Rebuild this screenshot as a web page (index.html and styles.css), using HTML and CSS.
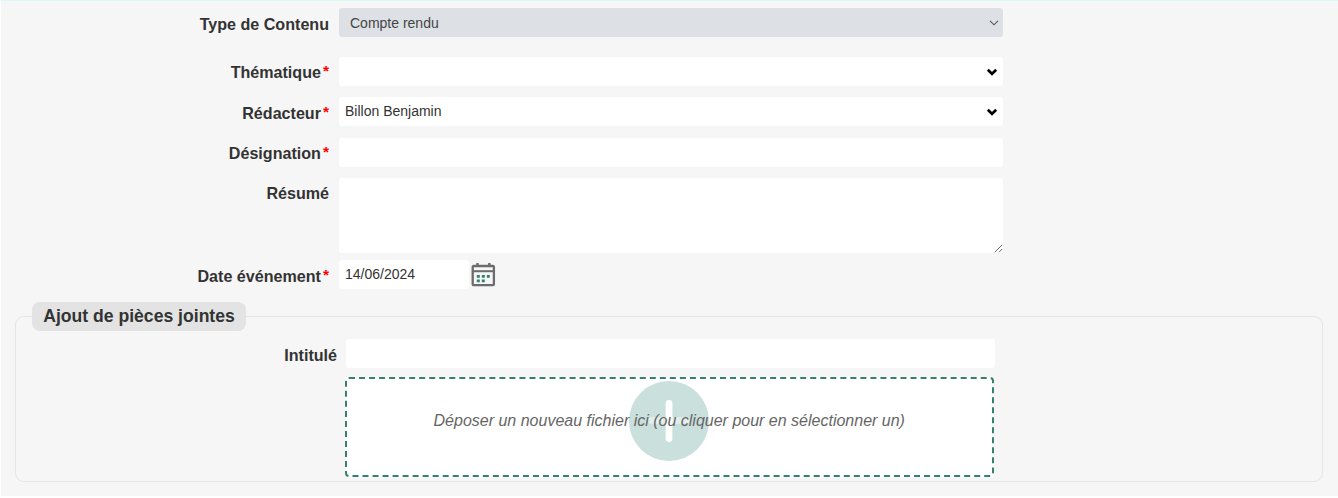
FILE: index.html
```html
<!DOCTYPE html>
<html lang="fr">
<head>
<meta charset="utf-8">
<title>Compte rendu</title>
<link rel="stylesheet" href="styles.css">
</head>
<body>
<form class="panel">
  <div class="row row-type">
    <div class="label">Type de Contenu</div>
    <div class="field disabled"><span>Compte rendu</span>
      <svg class="chev-thin" width="10" height="6" viewBox="0 0 10 6"><path d="M1 .8 5 4.8 9 .8" fill="none" stroke="#555" stroke-width="1.1"/></svg>
    </div>
  </div>
  <div class="row row-theme">
    <div class="label">Thématique<b class="req">*</b></div>
    <div class="field"><span></span>
      <svg class="chev" width="12" height="8" viewBox="0 0 12 8"><path d="M1.8 1.8 6 5.8 10.2 1.8" fill="none" stroke="#000" stroke-width="2.7"/></svg>
    </div>
  </div>
  <div class="row row-author">
    <div class="label">Rédacteur<b class="req">*</b></div>
    <div class="field"><span>Billon Benjamin</span>
      <svg class="chev" width="12" height="8" viewBox="0 0 12 8"><path d="M1.8 1.8 6 5.8 10.2 1.8" fill="none" stroke="#000" stroke-width="2.7"/></svg>
    </div>
  </div>
  <div class="row">
    <div class="label">Désignation<b class="req">*</b></div>
    <div class="field"></div>
  </div>
  <div class="row row-resume">
    <div class="label">Résumé</div>
    <div class="field area">
      <svg width="9" height="9" viewBox="0 0 9 9"><path d="M.8 8.2 8.2 .8M5 8.2 8.2 5" fill="none" stroke="#666" stroke-width="1"/></svg>
    </div>
  </div>
  <div class="row row-date">
    <div class="label">Date événement<b class="req">*</b></div>
    <div class="field date"><span>14/06/2024</span></div>
    <svg class="calendar" width="25" height="25" viewBox="0 0 25 25">
      <path d="M6.5 0V3M18.3 0V3" stroke="#6c6c6c" stroke-width="2.4"/>
      <rect x="1.7" y="3" width="21.2" height="19.2" rx="1" fill="none" stroke="#6c6c6c" stroke-width="2.3"/>
      <path d="M1.7 8.2H23" stroke="#6c6c6c" stroke-width="2"/>
      <path d="M5.8 13.3h3M10.8 13.3h3M15.8 13.3h3M5.8 17.8h3M10.8 17.8h3" stroke="#35806f" stroke-width="2.8"/>
    </svg>
  </div>
  <section class="group">
    <h2 class="legend">Ajout de pièces jointes</h2>
    <div class="row">
      <div class="label">Intitulé</div>
      <div class="field title"></div>
    </div>
    <div class="drop">
      <svg class="plus" width="80" height="80" viewBox="0 0 80 80"><circle cx="40" cy="40" r="40" fill="#cae0dc"/><path d="M22.5 39.5H57.5" stroke="#e2efed" stroke-width="6.4" stroke-linecap="round"/><path d="M40 22.5V57.5" stroke="#fff" stroke-width="6.8" stroke-linecap="round"/></svg>
      <span class="hint">Déposer un nouveau fichier ici (ou cliquer pour en sélectionner un)</span>
    </div>
  </section>
</form>
</body>
</html>
```
FILE: styles.css
```css
* { box-sizing: border-box; }
body {
  margin: 0;
  background: #fff;
  color: #333;
  font-family: "Liberation Sans", Arial, sans-serif;
}
.panel {
  height: 496px;
  margin-left: 1px;
  padding-top: 7px;
  border-top: 1px solid #dafafa;
  background: #f6f6f6;
}
.row {
  display: flex;
  align-items: flex-start;
  height: 29px;
  margin-bottom: 11px;
}
.row-type { margin-bottom: 19.6px; }
.row-theme { margin-bottom: 11.4px; }
.row-author { margin-bottom: 11.6px; }
.row-resume { height: 75px; margin-bottom: 7.4px; }
.label {
  display: flex;
  justify-content: flex-end;
  flex: none;
  width: 328px;
  margin-right: 10px;
  padding-top: 5.8px;
  font-size: 16.1px;
  font-weight: bold;
  line-height: 20px;
  white-space: nowrap;
}
.req { margin-left: 2px; color: #f00; font-size: 15.5px; line-height: 18px; }
.field {
  display: flex;
  align-items: center;
  justify-content: space-between;
  width: 664px;
  height: 29px;
  padding: 0 5px 1px 6px;
  border-radius: 3px;
  background: #fff;
  font-size: 14px;
}
.chev { margin-top: 2px; }
.disabled { padding: 0 4px 0 11px; background: #dde1e6; color: #444; }
.area { height: 75px; padding: 0; align-items: flex-end; justify-content: flex-end; }
.date { width: 130px; }
.calendar { margin: 3px 0 0 2px; }
.group {
  position: relative;
  height: 166px;
  margin: 27px 15px 0 14px;
  padding-top: 22px;
  border: 1px solid #e7e4e4;
  border-radius: 9px;
}
.legend {
  position: absolute;
  top: -15px;
  left: 16px;
  width: 214px;
  height: 29px;
  margin: 0;
  border-radius: 8px;
  background: #e3e3e3;
  font-size: 17.6px;
  line-height: 29px;
  text-align: center;
  white-space: nowrap;
}
.group .row { margin-bottom: 9px; }
.group .label { width: 321px; margin-right: 9px; }
.title { width: 649px; }
.drop {
  position: relative;
  display: flex;
  align-items: center;
  justify-content: center;
  width: 649.5px;
  height: 100px;
  margin-left: 328.5px;
  border: 2px dashed #35806f;
  border-radius: 4px;
  background: #fff;
}
.plus { position: absolute; top: 2px; left: 282px; }
.hint {
  position: relative;
  padding-bottom: 12px;
  color: #666;
  font-size: 16px;
  font-style: italic;
  line-height: 20px;
  white-space: nowrap;
}
```
